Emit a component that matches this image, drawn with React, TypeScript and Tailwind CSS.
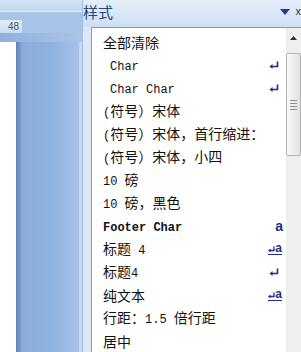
import React from "react";

type Mark = "ret" | "a" | "reta" | null;

const items: { text: string; indent?: boolean; bold?: boolean; mark?: Mark }[] = [
  { text: "全部清除" },
  { text: "Char", indent: true, mark: "ret" },
  { text: "Char Char", indent: true, mark: "ret" },
  { text: "(符号）宋体" },
  { text: "(符号）宋体，首行缩进：" },
  { text: "(符号）宋体，小四" },
  { text: "10 磅" },
  { text: "10 磅，黑色" },
  { text: "Footer Char", bold: true, mark: "a" },
  { text: "标题 4", mark: "reta" },
  { text: "标题4", mark: "ret" },
  { text: "纯文本", mark: "reta" },
  { text: "行距：1.5 倍行距" },
  { text: "居中" },
];

function Runs({ text, bold }: { text: string; bold?: boolean }) {
  const parts = text.split(/([\u0000-\u00ff]+)/).filter(Boolean);
  return (
    <>
      {parts.map((p, i) =>
        /^[\u0000-\u00ff]+$/.test(p) ? (
          <span
            key={i}
            className={`whitespace-pre text-[12px] font-['Liberation_Mono',monospace] ${bold ? "font-bold" : ""}`}
          >
            {p}
          </span>
        ) : (
          <span key={i} className="text-[14px] font-['Noto_Sans_CJK_SC',sans-serif]">
            {p}
          </span>
        )
      )}
    </>
  );
}

function ReturnIcon() {
  return (
    <svg width="10" height="8" viewBox="0 0 10 8">
      <path d="M8.5 0.5V5.5H2.5" stroke="#1b2f86" strokeWidth="1.6" fill="none" />
      <path d="M0.5 5.5L3.5 3V8Z" fill="#1b2f86" />
    </svg>
  );
}

function MarkIcon({ mark }: { mark: Mark }) {
  if (mark === "ret")
    return (
      <div className="mr-[7px]">
        <ReturnIcon />
      </div>
    );
  if (mark === "a")
    return (
      <span className="mr-[3px] text-[14px] font-bold leading-none text-[#1b2f86] font-['Liberation_Sans',sans-serif]">
        a
      </span>
    );
  if (mark === "reta")
    return (
      <div className="mr-[4px] flex items-end border-b-[1.5px] border-[#1b2f86] pb-[1px]">
        <svg width="7" height="7" viewBox="0 0 7 7">
          <path d="M6 0.5V4.5H2" stroke="#1b2f86" strokeWidth="1.3" fill="none" />
          <path d="M0 4.5L2.5 2.5V6.5Z" fill="#1b2f86" />
        </svg>
        <span className="text-[12px] font-bold leading-[10px] text-[#1b2f86] font-['Liberation_Sans',sans-serif]">
          a
        </span>
      </div>
    );
  return null;
}

export default function App() {
  return (
    <div className="flex h-[352px] w-[301px] overflow-hidden bg-[#8fb1de]">
      {/* document area */}
      <div className="flex w-[82px] flex-col">
        <div className="h-[11px] bg-gradient-to-b from-[#d3e3f5] to-[#c2d7f0]" />
        <div className="h-[1px] bg-[#e8f1fb]" />
        <div className="h-[8px] bg-[#a9c4e8]" />
        <div className="flex h-[13px] bg-[#a9c4e8]">
          <div className="flex w-[22px] items-center justify-end bg-gradient-to-b from-[#e4edf8] to-[#c9daf0] pr-[3px] text-[10px] leading-none text-[#4a5a70] font-['Liberation_Sans',sans-serif]">
            48
          </div>
        </div>
        <div className="h-[9px] bg-gradient-to-r from-[#8fb1de] to-[#a9c4e8]" />
        <div className="flex flex-1">
          <div className="w-[16px] bg-white" />
          <div className="w-[6px] bg-gradient-to-r from-[#5f80b2] to-[#86a8d6]" />
          <div className="flex-1 bg-gradient-to-r from-[#8aaddc] via-[#90b2df] to-[#a6c2e7]" />
          <div className="w-[3px] bg-[#c6d9f0]" />
        </div>
      </div>

      {/* styles pane */}
      <div className="flex flex-1 flex-col border-l border-[#a3bde0] bg-[#dce8f6]">
        <div className="flex h-[29px] items-center bg-gradient-to-b from-[#e5eefa] to-[#cfdff3] pb-[4px]">
          <span className="flex-1 text-[15px] leading-none text-[#24467a] font-['Noto_Sans_CJK_SC',sans-serif]">
            样式
          </span>
          <svg width="10" height="6" viewBox="0 0 10 6" className="mr-[6px]">
            <path d="M0 0H10L5 6Z" fill="#1e3f8c" />
          </svg>
          <span className="text-[11px] text-[#333] font-['Liberation_Sans',sans-serif]">x</span>
        </div>
        <div className="flex flex-1 pl-[8px]">
          <div className="flex flex-1 flex-col border-l border-t border-[#8a9bb0] bg-white pt-[2px] text-[#111]">
            {items.map((it) => (
              <div
                key={it.text}
                className={`flex h-[23px] items-center ${it.indent ? "pl-[18px]" : "pl-[11px]"}`}
              >
                <div className="flex-1 whitespace-nowrap leading-none">
                  <Runs text={it.text} bold={it.bold} />
                </div>
                <MarkIcon mark={it.mark ?? null} />
              </div>
            ))}
          </div>
          {/* scrollbar */}
          <div className="flex w-[15px] flex-col border-t border-[#8a9bb0] bg-[#efefef]">
            <div className="flex h-[20px] items-center justify-center">
              <svg width="7" height="4" viewBox="0 0 7 4">
                <path d="M0 4L3.5 0L7 4Z" fill="#333" />
              </svg>
            </div>
            <div className="mt-[5px] flex h-[103px] flex-col items-center justify-center gap-[2px] rounded-[2px] border border-[#b4b4b4] bg-gradient-to-r from-[#f9f9f9] to-[#e2e2e2]">
              <div className="h-[1px] w-[7px] bg-[#8d8d8d]" />
              <div className="h-[1px] w-[7px] bg-[#8d8d8d]" />
              <div className="h-[1px] w-[7px] bg-[#8d8d8d]" />
              <div className="h-[1px] w-[7px] bg-[#8d8d8d]" />
            </div>
            <div className="flex-1" />
          </div>
        </div>
      </div>
    </div>
  );
}
